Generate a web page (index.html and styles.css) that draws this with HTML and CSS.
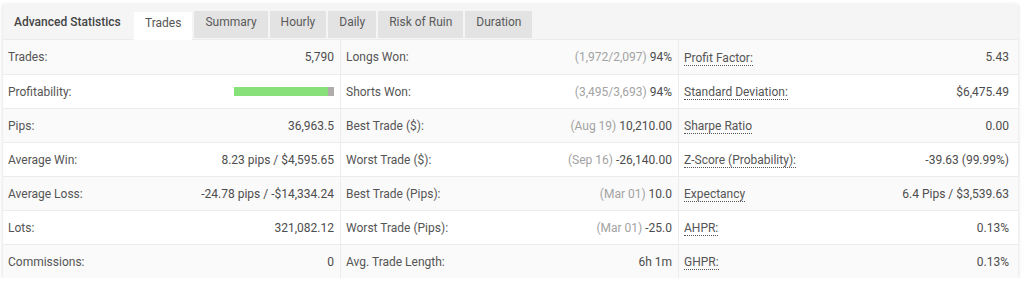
FILE: index.html
```html
<!DOCTYPE html>
<html>
<head>
<meta charset="utf-8">
<link rel="stylesheet" href="styles.css">
</head>
<body>
<div class="panel">
  <div class="tabbar">
    <div class="title">Advanced Statistics</div>
    <div class="tab active">Trades</div>
    <div class="tab">Summary</div>
    <div class="tab">Hourly</div>
    <div class="tab">Daily</div>
    <div class="tab">Risk of Ruin</div>
    <div class="tab">Duration</div>
  </div>
  <div class="grid">
    <div class="row odd">
      <div class="cell"><span class="lbl">Trades:</span><span class="val">5,790</span></div>
      <div class="cell"><span class="lbl">Longs Won:</span><span class="val"><span class="mute">(1,972/2,097)</span> 94%</span></div>
      <div class="cell"><span class="lbl dot">Profit Factor:</span><span class="val">5.43</span></div>
    </div>
    <div class="row">
      <div class="cell"><span class="lbl">Profitability:</span><span class="bar"><span class="win" style="width:94%"></span><span class="loss"></span></span></div>
      <div class="cell"><span class="lbl">Shorts Won:</span><span class="val"><span class="mute">(3,495/3,693)</span> 94%</span></div>
      <div class="cell"><span class="lbl dot">Standard Deviation:</span><span class="val">$6,475.49</span></div>
    </div>
    <div class="row odd">
      <div class="cell"><span class="lbl">Pips:</span><span class="val">36,963.5</span></div>
      <div class="cell"><span class="lbl">Best Trade ($):</span><span class="val"><span class="mute">(Aug 19)</span> 10,210.00</span></div>
      <div class="cell"><span class="lbl dot">Sharpe Ratio</span><span class="val">0.00</span></div>
    </div>
    <div class="row">
      <div class="cell"><span class="lbl">Average Win:</span><span class="val">8.23 pips / $4,595.65</span></div>
      <div class="cell"><span class="lbl">Worst Trade ($):</span><span class="val"><span class="mute">(Sep 16)</span> -26,140.00</span></div>
      <div class="cell"><span class="lbl dot">Z-Score (Probability):</span><span class="val">-39.63 (99.99%)</span></div>
    </div>
    <div class="row odd">
      <div class="cell"><span class="lbl">Average Loss:</span><span class="val">-24.78 pips / -$14,334.24</span></div>
      <div class="cell"><span class="lbl">Best Trade (Pips):</span><span class="val"><span class="mute">(Mar 01)</span> 10.0</span></div>
      <div class="cell"><span class="lbl dot">Expectancy</span><span class="val">6.4 Pips / $3,539.63</span></div>
    </div>
    <div class="row">
      <div class="cell"><span class="lbl">Lots:</span><span class="val">321,082.12</span></div>
      <div class="cell"><span class="lbl">Worst Trade (Pips):</span><span class="val"><span class="mute">(Mar 01)</span> -25.0</span></div>
      <div class="cell"><span class="lbl dot">AHPR:</span><span class="val">0.13%</span></div>
    </div>
    <div class="row odd last">
      <div class="cell"><span class="lbl">Commissions:</span><span class="val">0</span></div>
      <div class="cell"><span class="lbl">Avg. Trade Length:</span><span class="val">6h 1m</span></div>
      <div class="cell"><span class="lbl dot">GHPR:</span><span class="val">0.13%</span></div>
    </div>
  </div>
</div>
</body>
</html>
```

FILE: styles.css
```css
html, body {
  margin: 0;
  padding: 0;
  background: #ffffff;
}
body {
  font-family: Roboto, "Liberation Sans", Arial, sans-serif;
  font-size: 12px;
  color: #555;
}
.panel {
  margin: 4px 0 0 3px;
  width: 1015px;
  background: #fff;
  box-shadow: 0 1px 4px rgba(0,0,0,0.16);
}
.tabbar {
  display: flex;
  align-items: flex-end;
  height: 36px;
  background: #f5f5f5;
  border-bottom: 1px solid #ececec;
  box-sizing: border-box;
}
.title {
  width: 131px;
  height: 27px;
  line-height: 22px;
  padding-left: 11px;
  box-sizing: border-box;
  font-weight: 500;
  color: #444;
  margin-bottom: 1px;
}
.tab {
  height: 27px;
  line-height: 22px;
  padding: 0 11px;
  background: #e3e3e3;
  margin-right: 2px;
  margin-bottom: 1px;
  color: #5a5a5a;
}
.tab.active {
  background: #fff;
  color: #555;
  height: 28px;
  margin-bottom: -1px;
}
.grid {
  display: flex;
  flex-direction: column;
}
.row {
  display: grid;
  grid-template-columns: 337px 338px 340px;
  height: 34px;
  border-top: 1px solid #ececec;
  box-sizing: border-box;
}
.row:first-child {
  border-top: none;
}
.row.odd {
  background: #fafafa;
}
.cell {
  display: flex;
  align-items: center;
  justify-content: space-between;
  padding: 0 6px 0 5px;
  border-left: 1px solid #ececec;
}
.cell:first-child {
  border-left: none;
}
.cell:last-child {
  padding-right: 9px;
}
.lbl {
  color: #555;
}
.lbl.dot {
  border-bottom: 1px dotted #555;
  line-height: 14px;
  margin-top: 2px;
}
.val {
  color: #4d4d4d;
  white-space: nowrap;
}
.mute {
  color: #a3a3a3;
}
.bar {
  display: flex;
  width: 100px;
  height: 9px;
}
.win {
  background: #88e07a;
  height: 100%;
}
.loss {
  flex: 1;
  background: #b0acac;
  height: 100%;
}
```
